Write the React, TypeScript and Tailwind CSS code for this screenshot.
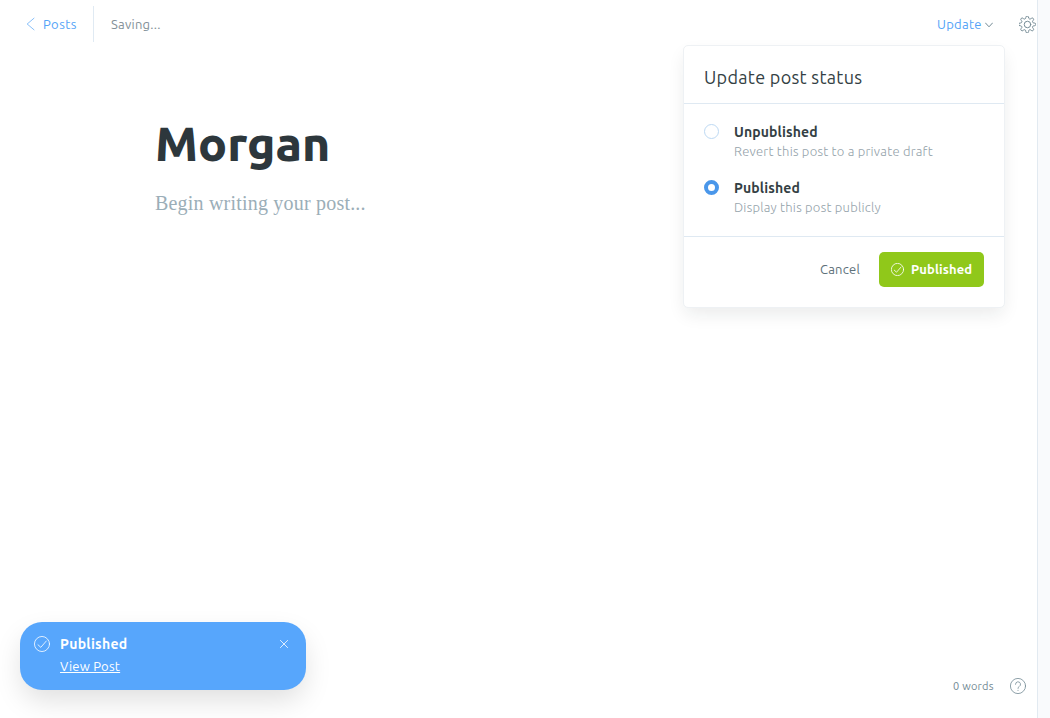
import React from "react";

function CheckCircle({ className }: { className: string }) {
  return (
    <svg viewBox="0 0 24 24" fill="none" stroke="currentColor" strokeLinecap="round" strokeLinejoin="round" className={className}>
      <circle cx="12" cy="12" r="11.3" />
      <path d="M6 13.2 10.2 17 18.5 7.5" />
    </svg>
  );
}

function Gear() {
  return (
    <svg viewBox="0 0 24 24" fill="none" stroke="currentColor" strokeWidth="1.4" strokeLinecap="round" strokeLinejoin="round" className="size-[17px]">
      <path d="M13.546 2.438a1.957 1.957 0 0 0 3.29 1.362l.5-.47a1.958 1.958 0 0 1 2.764 2.769l-.462.5a1.957 1.957 0 0 0 1.363 3.29h.681a1.957 1.957 0 0 1 0 3.913H21a1.957 1.957 0 0 0-1.363 3.29l.463.508a1.957 1.957 0 0 1-2.765 2.765l-.5-.463a1.957 1.957 0 0 0-3.29 1.363v.683a1.957 1.957 0 0 1-3.913 0v-.683a1.957 1.957 0 0 0-3.29-1.363l-.5.463a1.957 1.957 0 0 1-2.765-2.765l.463-.505a1.957 1.957 0 0 0-1.363-3.29h-.683a1.957 1.957 0 0 1 0-3.913h.683a1.957 1.957 0 0 0 1.363-3.29l-.468-.5a1.957 1.957 0 0 1 2.765-2.765l.5.463a1.957 1.957 0 0 0 3.29-1.362V2.052a1.957 1.957 0 0 1 3.914 0Z" />
      <circle cx="12" cy="12" r="4.6" />
    </svg>
  );
}

function Header() {
  return (
    <header className="flex h-12 items-center pl-[26px] pr-px text-[13px]">
      <a className="flex items-center text-[#54a3f7]">
        <svg viewBox="0 0 9 14" fill="none" stroke="currentColor" strokeWidth="0.7" strokeLinecap="round" strokeLinejoin="round" className="h-[14px] w-[9px]">
          <path d="M8 1.2 1.2 7 8 12.8" />
        </svg>
        <span className="ml-2 w-[50px] whitespace-nowrap pt-[2px] tracking-[0.45px]">Posts</span>
      </a>
      <div className="h-9 w-px bg-[#e0eaf3]" />
      <span className="ml-[17px] pt-[2px] text-[#839199]">Saving...</span>
      <button className="ml-auto flex items-center text-[#54a3f7]">
        <span className="w-[48px] whitespace-nowrap pt-[2px] text-left tracking-[0.3px]">Update</span>
        <svg viewBox="0 0 8 6" fill="none" stroke="#738a94" strokeLinecap="round" strokeLinejoin="round" className="mt-[2px] h-[6px] w-2">
          <path d="M.5 1 4 4.8 7.5 1" />
        </svg>
      </button>
      <button className="ml-[26px] text-[#738a94]">
        <Gear />
      </button>
    </header>
  );
}

function Option({ checked, title, detail }: { checked?: boolean; title: React.ReactNode; detail: React.ReactNode }) {
  return (
    <label className="flex h-14 whitespace-nowrap">
      <span
        className={
          checked
            ? "mt-[2px] size-[15px] rounded-full border-4 border-[#4a97ea] bg-white"
            : "mt-[2px] size-[15px] rounded-full border border-[#bdd9f3] bg-white"
        }
      />
      <span className="ml-[15px] flex flex-col">
        <span className="h-[19px] text-[14px] font-semibold leading-5 tracking-[0.13px] text-[#343f44]">{title}</span>
        <span className="h-5 text-[13px] font-light leading-5 text-[#94a2aa]">{detail}</span>
      </span>
    </label>
  );
}

function StatusMenu() {
  return (
    <section className="absolute left-[683px] top-[45px] h-[263px] w-[322px] rounded-[5px] border border-[#eef1f4] bg-white shadow-[0_8px_18px_-2px_rgba(20,30,35,0.09)]">
      <h2 className="flex h-[58px] items-center whitespace-nowrap border-b border-[#dfe9f2] px-5 pt-[5px] text-[18px] tracking-[0.3px] text-[#343f44]">
        <span>Update post status</span>
      </h2>
      <div className="h-[133px] border-b border-[#dfe9f2] px-5 pt-[18px]">
        <Option title={<span>Unpublished</span>} detail={<span>Revert this post to a private draft</span>} />
        <Option checked title={<span>Published</span>} detail={<span>Display this post publicly</span>} />
      </div>
      <div className="flex items-center justify-end px-5 pt-[15px] text-[13px]">
        <button className="w-[59px] whitespace-nowrap text-left text-[#5d7079]">Cancel</button>
        <button className="flex h-[35px] w-[105px] items-center whitespace-nowrap rounded-[5px] bg-[#90c81a] pl-3 font-semibold tracking-[0.12px] text-white">
          <CheckCircle className="size-[13px] stroke-[1.5]" />
          <span className="ml-[7px]">Published</span>
        </button>
      </div>
    </section>
  );
}

function Toast() {
  return (
    <aside className="absolute left-5 top-[622px] flex h-[68px] w-[286px] whitespace-nowrap rounded-[22px] bg-[#57a6fc] pl-[14px] pr-[18px] pt-[12px] text-white shadow-[0_12px_28px_-2px_rgba(0,0,0,0.13)]">
      <CheckCircle className="mt-[2px] size-4 stroke-[1.2]" />
      <div className="ml-[10px] flex flex-col">
        <span className="h-[21px] text-[14px] font-bold leading-5 tracking-[0.3px]">Published</span>
        <a className="h-[22px] text-[13px] leading-[22px] underline">View Post</a>
      </div>
      <svg viewBox="0 0 8 8" fill="none" stroke="currentColor" strokeWidth="0.8" strokeLinecap="round" className="ml-auto mt-[6px] size-2">
        <path d="m.4.4 7.2 7.2m0-7.2L.4 7.6" />
      </svg>
    </aside>
  );
}

export default function App() {
  return (
    <div className="relative flex h-[718px] w-[1050px] overflow-hidden bg-white font-['Ubuntu','Noto_Sans',sans-serif] tracking-[0.23px] antialiased">
      <main className="flex w-[1037px] flex-col">
        <Header />
        <div className="flex flex-col whitespace-nowrap pl-[155px] pt-[65px]">
          <h1 className="h-[61px] text-[48px] font-extrabold leading-[60px] tracking-[0px] text-[#2d373c]">Morgan</h1>
          <p className="mt-[14px] font-['Liberation_Serif',serif] text-[20px] leading-[30px] tracking-[0.2px] text-[#9baeb8]">Begin writing your post...</p>
        </div>
        <footer className="mb-[22px] mt-auto flex h-5 items-center justify-end pr-[11px] text-[11px] text-[#738a94]">
          <span className="w-[57px] whitespace-nowrap">0 words</span>
          <svg viewBox="0 0 16 16" fill="none" stroke="currentColor" strokeWidth="0.8" strokeLinecap="round" className="size-4">
            <circle cx="8" cy="8" r="7.6" />
            <path d="M5.5 6.3a2.5 2.5 0 1 1 3.7 2.2Q8 9.1 8 10.4M8 12.3v.2" />
          </svg>
        </footer>
      </main>
      <div className="flex-1 border-l border-[#e2eaf1] bg-[#f9fafc]" />
      <StatusMenu />
      <Toast />
    </div>
  );
}
